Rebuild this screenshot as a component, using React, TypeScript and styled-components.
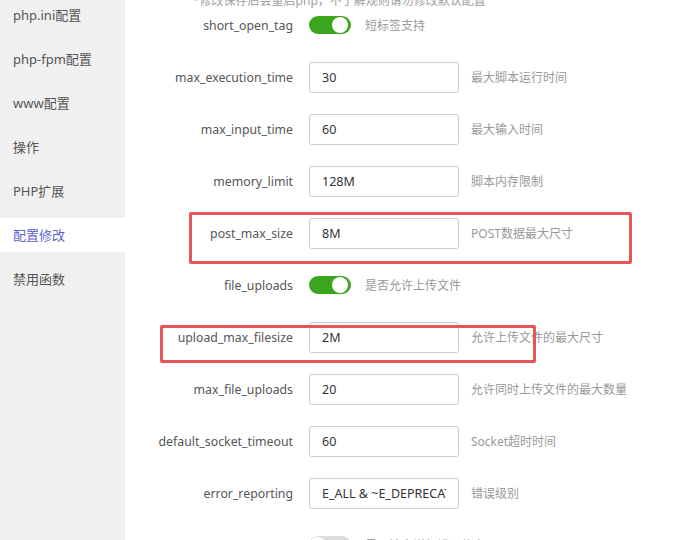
import React from 'react';
import styled, { createGlobalStyle } from 'styled-components';

const GlobalStyle = createGlobalStyle`
  html, body {
    margin: 0;
    padding: 0;
    background: #ffffff;
    overflow: hidden;
  }
  body {
    font-family: "Microsoft YaHei", "Noto Sans", "Noto Sans CJK SC", sans-serif;
  }
`;

const Page = styled.div`
  display: flex;
  width: 697px;
  height: 540px;
  overflow: hidden;
  position: relative;
`;

const Sidebar = styled.div`
  width: 125px;
  flex-shrink: 0;
  background-color: #f0f0f0;
  display: flex;
  flex-direction: column;
  gap: 10px;
  margin-top: -2px;
`;

const NavItem = styled.div<{ $active?: boolean }>`
  height: 34px;
  line-height: 34px;
  padding-left: 13px;
  font-size: 13px;
  color: ${(props) => (props.$active ? '#5f5fd0' : '#555555')};
  background-color: ${(props) => (props.$active ? '#ffffff' : 'transparent')};
  white-space: nowrap;
`;

const Main = styled.div`
  flex: 1;
  display: flex;
  flex-direction: column;
`;

const Note = styled.div`
  height: 20px;
  line-height: 20px;
  margin-top: -9px;
  padding-left: 68px;
  font-size: 12px;
  color: #a0a0a0;
  white-space: nowrap;
`;

const Form = styled.div`
  display: grid;
  grid-template-columns: 168px 150px 1fr;
  column-gap: 16px;
  row-gap: 20px;
  grid-auto-rows: 32px;
  margin-top: -2px;
`;

const Label = styled.div`
  display: flex;
  align-items: center;
  justify-content: flex-end;
  font-size: 12.3px;
  color: #555555;
  white-space: nowrap;
`;

const Field = styled.div`
  display: flex;
  align-items: center;
`;

const Input = styled.input`
  box-sizing: border-box;
  width: 150px;
  height: 31px;
  border: 1px solid #cccccc;
  border-radius: 3px;
  padding: 0 12px;
  font-family: inherit;
  font-size: 12.5px;
  color: #333333;
  background: #ffffff;
  outline: none;
`;

const Switch = styled.span<{ $on: boolean }>`
  position: relative;
  display: inline-block;
  width: 42px;
  height: 18px;
  border-radius: 9px;
  background-color: ${(props) => (props.$on ? '#3ba51e' : '#dddddd')};
  &::after {
    content: '';
    position: absolute;
    top: 1px;
    left: ${(props) => (props.$on ? '23px' : '1px')};
    width: 16px;
    height: 16px;
    border-radius: 50%;
    background: #ffffff;
  }
`;

const Desc = styled.div<{ $switch?: boolean }>`
  display: flex;
  align-items: center;
  margin-left: ${(props) => (props.$switch ? '-110px' : '-4px')};
  font-size: 12px;
  color: #999999;
  white-space: nowrap;
`;

const Mark = styled.div`
  position: absolute;
  border: 3px solid #e85558;
  border-radius: 2px;
  box-sizing: border-box;
  pointer-events: none;
`;

type Row = { name: string; value?: string; on?: boolean; desc: string };

const rows: Row[] = [
  { name: 'short_open_tag', on: true, desc: '短标签支持' },
  { name: 'max_execution_time', value: '30', desc: '最大脚本运行时间' },
  { name: 'max_input_time', value: '60', desc: '最大输入时间' },
  { name: 'memory_limit', value: '128M', desc: '脚本内存限制' },
  { name: 'post_max_size', value: '8M', desc: 'POST数据最大尺寸' },
  { name: 'file_uploads', on: true, desc: '是否允许上传文件' },
  { name: 'upload_max_filesize', value: '2M', desc: '允许上传文件的最大尺寸' },
  { name: 'max_file_uploads', value: '20', desc: '允许同时上传文件的最大数量' },
  { name: 'default_socket_timeout', value: '60', desc: 'Socket超时时间' },
  { name: 'error_reporting', value: 'E_ALL & ~E_DEPRECATED', desc: '错误级别' },
  { name: 'display_errors', on: false, desc: '是否输出详细错误信息' },
];

const menu = ['php.ini配置', 'php-fpm配置', 'www配置', '操作', 'PHP扩展', '配置修改', '禁用函数'];

const App: React.FunctionComponent = () => {
  return (
    <>
      <GlobalStyle />
      <Page>
        <Sidebar>
          {menu.map((m) => (
            <NavItem key={m} $active={m === '配置修改'}>
              {m}
            </NavItem>
          ))}
        </Sidebar>
        <Main>
          <Note>*修改保存后会重启php，不了解规则请勿修改默认配置</Note>
          <Form>
            {rows.map((r) => (
              <React.Fragment key={r.name}>
                <Label>{r.name === 'display_errors' ? '' : r.name}</Label>
                <Field>
                  {r.value !== undefined ? (
                    <Input defaultValue={r.value} />
                  ) : (
                    <Switch $on={!!r.on} />
                  )}
                </Field>
                <Desc $switch={r.value === undefined}>{r.desc}</Desc>
              </React.Fragment>
            ))}
          </Form>
        </Main>
        <Mark style={{ left: 189, top: 212, width: 443, height: 52 }} />
        <Mark style={{ left: 160, top: 325, width: 376, height: 38 }} />
      </Page>
    </>
  );
};

export default App;
